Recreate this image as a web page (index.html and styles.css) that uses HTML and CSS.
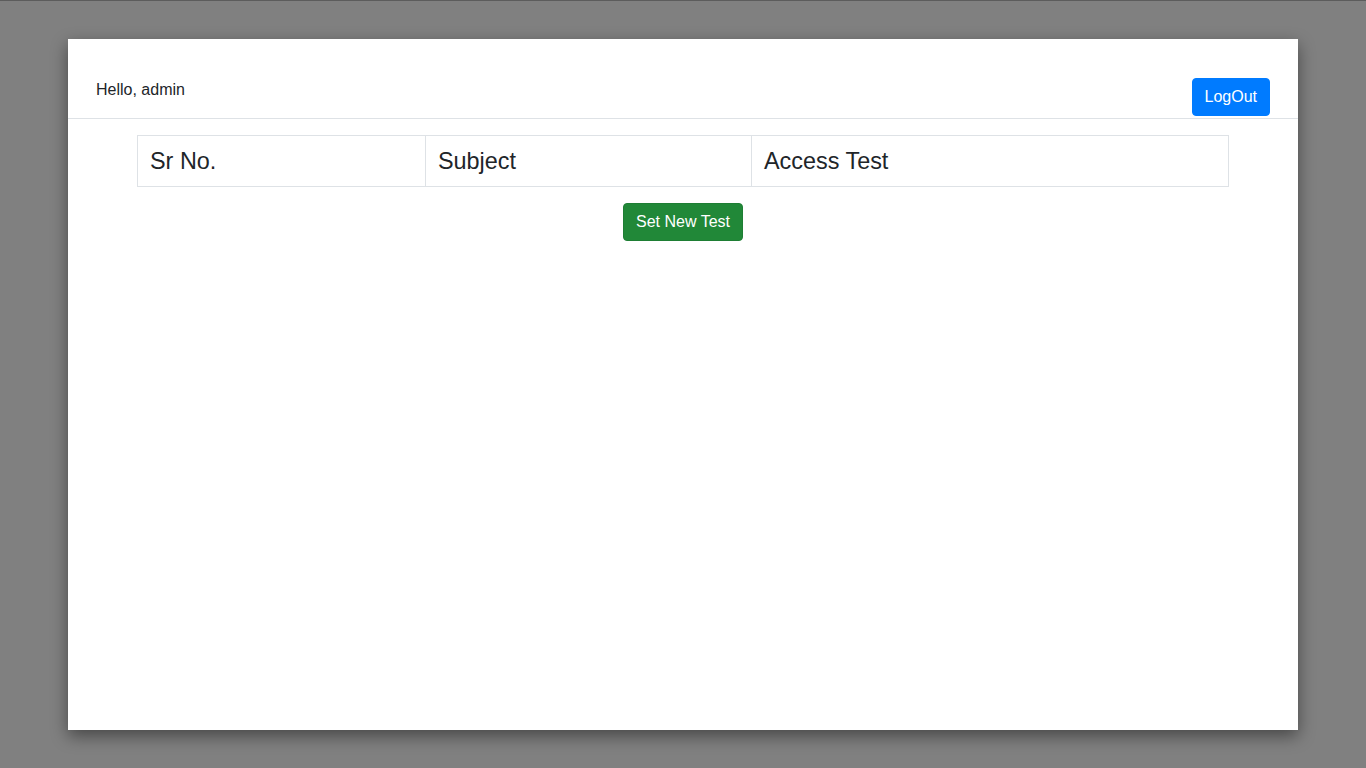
FILE: index.html
```html
<!DOCTYPE html>
<html>
<head>
<meta charset="utf-8">
<link rel="stylesheet" href="styles.css">
</head>
<body>
<div class="page">
  <div class="panel">
    <header class="topbar">
      <span class="greeting">Hello, admin</span>
      <button class="btn btn-blue">LogOut</button>
    </header>
    <main class="content">
      <table class="tests">
        <thead>
          <tr>
            <th class="c1">Sr No.</th>
            <th class="c2">Subject</th>
            <th class="c3">Access Test</th>
          </tr>
        </thead>
      </table>
      <div class="actions">
        <button class="btn btn-green">Set New Test</button>
      </div>
    </main>
  </div>
</div>
</body>
</html>
```
FILE: styles.css
```css
html, body {
  margin: 0;
  padding: 0;
  background: #808080;
  height: 100%;
}
body {
  border-top: 1px solid #5c5c5c;
  box-sizing: border-box;
  font-family: "Liberation Sans", Arial, sans-serif;
  color: #212529;
}
.page {
  padding: 38px 68px 0 68px;
}
.panel {
  background: #fff;
  height: 691px;
  box-shadow: 0 6px 16px rgba(0, 0, 0, 0.45);
}
.topbar {
  display: flex;
  justify-content: space-between;
  align-items: flex-start;
  padding: 39px 28px 2px 28px;
  border-bottom: 1px solid #dee2e6;
}
.greeting {
  font-size: 16px;
  line-height: 24px;
}
.btn {
  font-family: "Liberation Sans", Arial, sans-serif;
  font-size: 16px;
  line-height: 24px;
  padding: 6px 12px;
  border: 1px solid transparent;
  border-radius: 4px;
  color: #fff;
  cursor: pointer;
}
.btn-blue {
  background: #007bff;
  border-color: #007bff;
}
.btn-green {
  background: #218838;
  border-color: #1e7e34;
}
.content {
  padding: 16px 69px 0 69px;
}
.tests {
  width: 100%;
  border-collapse: collapse;
}
.tests th {
  text-align: left;
  font-weight: normal;
  font-size: 23.4px;
  line-height: 26px;
  padding: 12px 12px;
  border: 1px solid #dee2e6;
}
.c1 { width: 288px; box-sizing: border-box; }
.c2 { width: 326px; box-sizing: border-box; }
.actions {
  display: flex;
  justify-content: center;
  padding-top: 16px;
}
```
